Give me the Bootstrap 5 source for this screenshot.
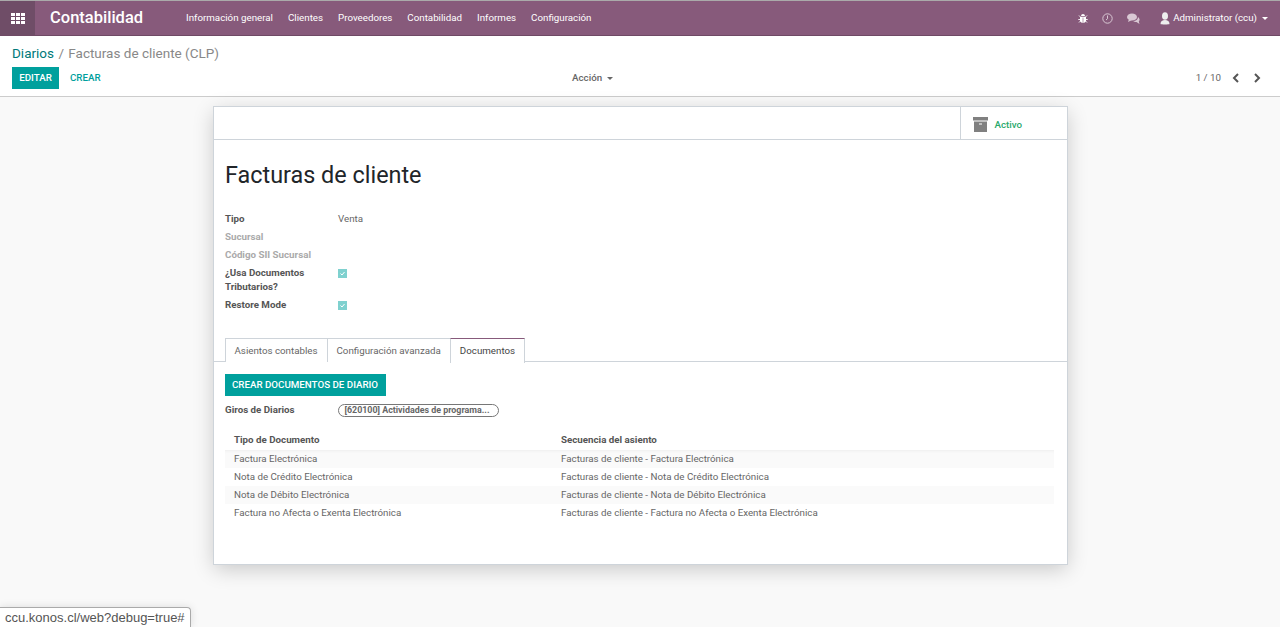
<!DOCTYPE html>
<html lang="es">
<head>
  <meta charset="UTF-8">
  <meta name="viewport" content="width=device-width, initial-scale=1.0">
  <title>Facturas de cliente</title>
  <link href="https://cdn.jsdelivr.net/npm/bootstrap@5.3.0/dist/css/bootstrap.min.css" rel="stylesheet">
  <style>
    html, body { height: 100%; overflow: hidden; }
    body { font-family: Roboto, "Liberation Sans", sans-serif; font-size: 9.75px; line-height: 14px; color: #666; background: #f9f9f9; border-top: 1px solid #aaa; }
    .app-bar { height: 35px; background: #875a7b; border-bottom: 1px solid #6f4a65; color: #fff; }
    .apps-btn { width: 35px; background: #6f4d67; }
    .app-name { font-size: 16.5px; font-weight: 500; width: 151px; padding-left: 15px; }
    .menu-link { color: #fff; font-size: 9.75px; text-decoration: none; }
    .menu-list { gap: 15px; }
    .sys-icons { gap: 14px; padding-right: 12px; }
    .sys-user { margin-left: 6px; }
    .user-name { margin-left: 3px; }
    .caret-down { display: inline-block; border-top: 3.5px solid currentColor; border-left: 3.5px solid transparent; border-right: 3.5px solid transparent; vertical-align: middle; margin-left: 5px; }
    .control-panel { height: 61px; background: #fff; border-bottom: 1px solid #ccc; padding: 8px 12px 0; }
    .crumbs { font-size: 13.5px; line-height: 18px; color: #888; }
    .crumbs a { color: #00797a; text-decoration: none; }
    .crumb-sep { margin: 0 1px; }
    .btn-teal { background: #00a09d; color: #fff; font-size: 9.75px; font-weight: 500; border: 0; border-radius: 0; line-height: 14px; }
    .btn-teal:hover { background: #00a09d; color: #fff; }
    .cp-row { margin-top: 5px; height: 22px; }
    .cp-left { width: 560px; }
    .btn-edit { padding: 4px 7px; width: 47px; }
    .link-create { color: #00a09d; font-weight: 500; margin-left: 11px; text-decoration: none; }
    .cp-action { width: 46px; font-weight: 500; color: #666; white-space: nowrap; }
    .cp-pager { margin-left: auto; gap: 11px; padding-right: 7px; color: #666; }
    .pager-next { margin-left: 2px; }
    .sheet-wrap { padding-top: 9px; }
    .form-sheet { width: 855px; height: 459px; background: #fff; border: 1px solid #ced4da; box-shadow: 0 5px 20px -1px rgba(0,0,0,.2); }
    .box-row { height: 33px; border-bottom: 1px solid #ced4da; }
    .box-btn { width: 107px; border-left: 1px solid #ced4da; gap: 7px; padding: 3px 0 0 12px; color: #28a96b; font-weight: 500; }
    .sheet-title { font-size: 23.4px; line-height: 30px; font-weight: 400; color: #212529; margin: 20px 0 0; padding-left: 11.5px; }
    .field-list { margin-top: 20px; padding-left: 11.5px; }
    .field-row { display: flex; min-height: 18px; padding-top: 2px; }
    .field-tall { min-height: 32px; }
    .field-name { width: 113px; font-weight: 700; color: #555; }
    .field-muted { color: #aaa; }
    .check-on { width: 9px; height: 9px; background: #7fd1cf; display: flex; align-items: center; justify-content: center; margin-top: 3px; }
    .tab-strip { margin-top: 24px; padding-left: 11px; height: 24px; border-bottom: 1px solid #ced4da; gap: 0; }
    .tab-item { height: 24px; padding: 5px 9px 0; border: 1px solid #ced4da; border-bottom: 0; margin-right: -1px; background: #fff; white-space: nowrap; }
    .tab-item.on { border-top-color: #875a7b; color: #444; height: 25px; }
    .tab-body { padding: 12px 13px 0 11px; }
    .btn-make { padding: 4px 7px; height: 22px; width: 161px; white-space: nowrap; }
    .giros { display: flex; margin-top: 6px; height: 16px; align-items: center; padding-left: .5px; }
    .giros .field-name { width: 112.5px; }
    .tag-pill { width: 161px; height: 13px; border: 1.5px solid #777; border-radius: 7px; line-height: 10px; padding-left: 6px; font-weight: 700; color: #666; font-size: 8.9px; white-space: nowrap; overflow: hidden; }
    .doc-table { margin-top: 12px; border-collapse: collapse; width: 829px; }
    .doc-table th { height: 20px; font-weight: 700; color: #555; padding: 0 9.5px; }
    .doc-table td { height: 18px; padding: 0 9.5px; color: #666; }
    .doc-table th:first-child, .doc-table td:first-child { width: 327px; }
    .doc-table tbody tr:nth-child(odd) { background: #fafafa; }
    .doc-table tbody tr:first-child { box-shadow: inset 0 3px 3px -2px #eee; }
    .status-tip { position: absolute; left: 0; bottom: 0; height: 20px; padding: 2px 5px 0 5px; background: #fff; border: 1px solid #aaa; border-left: 0; border-bottom: 0; border-radius: 0 4px 0 0; font-size: 13px; line-height: 16px; color: #555; font-family: "Liberation Sans", sans-serif; box-shadow: 0 0 8px rgba(0,0,0,.12); }
  </style>
</head>
<body>
  <nav class="app-bar d-flex align-items-stretch">
    <div class="apps-btn d-flex align-items-center justify-content-center">
      <svg width="14" height="11" viewBox="0 0 14 11" fill="#fff">
        <rect x="0" y="0" width="4" height="3"/><rect x="5" y="0" width="4" height="3"/><rect x="10" y="0" width="4" height="3"/>
        <rect x="0" y="4" width="4" height="3"/><rect x="5" y="4" width="4" height="3"/><rect x="10" y="4" width="4" height="3"/>
        <rect x="0" y="8" width="4" height="3"/><rect x="5" y="8" width="4" height="3"/><rect x="10" y="8" width="4" height="3"/>
      </svg>
    </div>
    <div class="app-name d-flex align-items-center">Contabilidad</div>
    <div class="menu-list d-flex align-items-center">
      <a class="menu-link" href="#">Información general</a>
      <a class="menu-link" href="#">Clientes</a>
      <a class="menu-link" href="#">Proveedores</a>
      <a class="menu-link" href="#">Contabilidad</a>
      <a class="menu-link" href="#">Informes</a>
      <a class="menu-link" href="#">Configuración</a>
    </div>
    <div class="sys-icons ms-auto d-flex align-items-center">
      <svg width="10" height="10" viewBox="0 0 10 10" fill="#fff"><path d="M2 4h6v3.500C8 9 6.500 10 5 10S2 9 2 7.500z"/><path d="M3 3.300C3 1.800 4 1 5 1s2 .8 2 2.300z"/><path d="M1 2.500l1.500 1.500M9 2.500L7.500 4M.3 6.500h2M9.700 6.500h-2M1 9.500l1.500-1.500M9 9.500L7.500 8" stroke="#fff" stroke-width=".9"/><path d="M5 4.500V10" stroke="#875a7b" stroke-width=".6"/></svg>
      <svg width="11" height="11" viewBox="0 0 11 11" fill="none" stroke="#d9c8d4" stroke-width="1"><circle cx="5.5" cy="5.5" r="4.7"/><path d="M5.5 2.5v3.2L4 7"/></svg>
      <svg width="13" height="11" viewBox="0 0 13 11" fill="#d9c8d4"><ellipse cx="5" cy="4" rx="5" ry="3.6"/><path d="M2 6L1 9l4-2z"/><path d="M11 4c2 1.500 2 3.500 .8 4.500L12.500 11 9.500 9C8 9 7 8.700 6.300 8 9 8 11 6.500 11 4z"/></svg>
      <div class="sys-user d-flex align-items-center">
        <svg width="10" height="13" viewBox="0 0 10 13" fill="#eee"><ellipse cx="5" cy="4" rx="3" ry="3.800"/><path d="M0.500 12c0-3 2-4 4.500-4s4.500 1 4.500 4c0 .6-9 .6-9 0z"/></svg>
        <span class="user-name">Administrator (ccu)</span><span class="caret-down"></span>
      </div>
    </div>
  </nav>

  <header class="control-panel">
    <div class="crumbs"><a href="#">Diarios</a> <span class="crumb-sep">/</span> Facturas de cliente (CLP)</div>
    <div class="cp-row d-flex align-items-center">
      <div class="cp-left d-flex align-items-center">
        <button class="btn btn-teal btn-edit" type="button">EDITAR</button>
        <a class="link-create" href="#">CREAR</a>
      </div>
      <div class="cp-action">Acción<span class="caret-down"></span></div>
      <div class="cp-pager d-flex align-items-center">
        <span>1 / 10</span>
        <svg width="8" height="10" viewBox="0 0 8 10" fill="none" stroke="#555" stroke-width="2"><path d="M6 1L2 5l4 4"/></svg>
        <svg class="pager-next" width="8" height="10" viewBox="0 0 8 10" fill="none" stroke="#555" stroke-width="2"><path d="M2 1l4 4-4 4"/></svg>
      </div>
    </div>
  </header>

  <main class="sheet-wrap d-flex justify-content-center">
    <section class="form-sheet">
      <div class="box-row d-flex justify-content-end">
        <div class="box-btn d-flex align-items-center">
          <svg width="15" height="15" viewBox="0 0 15 15" fill="#808080"><rect x="0" y="0" width="15" height="3.500"/><path d="M1 4.500h13V15H1z"/><rect x="6" y="6.500" width="3" height="1" fill="#fff"/></svg>
          <span>Activo</span>
        </div>
      </div>
      <h1 class="sheet-title">Facturas de cliente</h1>
      <div class="field-list">
        <div class="field-row"><div class="field-name">Tipo</div><div>Venta</div></div>
        <div class="field-row"><div class="field-name field-muted">Sucursal</div></div>
        <div class="field-row"><div class="field-name field-muted">Código SII Sucursal</div></div>
        <div class="field-row field-tall"><div class="field-name">¿Usa Documentos<br>Tributarios?</div><div class="check-on"><svg width="5" height="5" viewBox="0 0 5 5" fill="none" stroke="#fff"><path d="M.5 2.500l1.500 1.500 2.500-3"/></svg></div></div>
        <div class="field-row"><div class="field-name">Restore Mode</div><div class="check-on"><svg width="5" height="5" viewBox="0 0 5 5" fill="none" stroke="#fff"><path d="M.5 2.500l1.500 1.500 2.500-3"/></svg></div></div>
      </div>
      <div class="tab-strip d-flex">
        <div class="tab-item">Asientos contables</div>
        <div class="tab-item">Configuración avanzada</div>
        <div class="tab-item on">Documentos</div>
      </div>
      <div class="tab-body">
        <button class="btn btn-teal btn-make" type="button">CREAR DOCUMENTOS DE DIARIO</button>
        <div class="giros">
          <div class="field-name">Giros de Diarios</div>
          <div class="tag-pill">[620100] Actividades de programa...</div>
        </div>
        <table class="doc-table">
          <thead><tr><th>Tipo de Documento</th><th>Secuencia del asiento</th></tr></thead>
          <tbody>
            <tr><td>Factura Electrónica</td><td>Facturas de cliente - Factura Electrónica</td></tr>
            <tr><td>Nota de Crédito Electrónica</td><td>Facturas de cliente - Nota de Crédito Electrónica</td></tr>
            <tr><td>Nota de Débito Electrónica</td><td>Facturas de cliente - Nota de Débito Electrónica</td></tr>
            <tr><td>Factura no Afecta o Exenta Electrónica</td><td>Facturas de cliente - Factura no Afecta o Exenta Electrónica</td></tr>
          </tbody>
        </table>
      </div>
    </section>
  </main>

  <div class="status-tip">ccu.konos.cl/web?debug=true#</div>

  <script src="https://cdn.jsdelivr.net/npm/bootstrap@5.3.0/dist/js/bootstrap.bundle.min.js"></script>
</body>
</html>
